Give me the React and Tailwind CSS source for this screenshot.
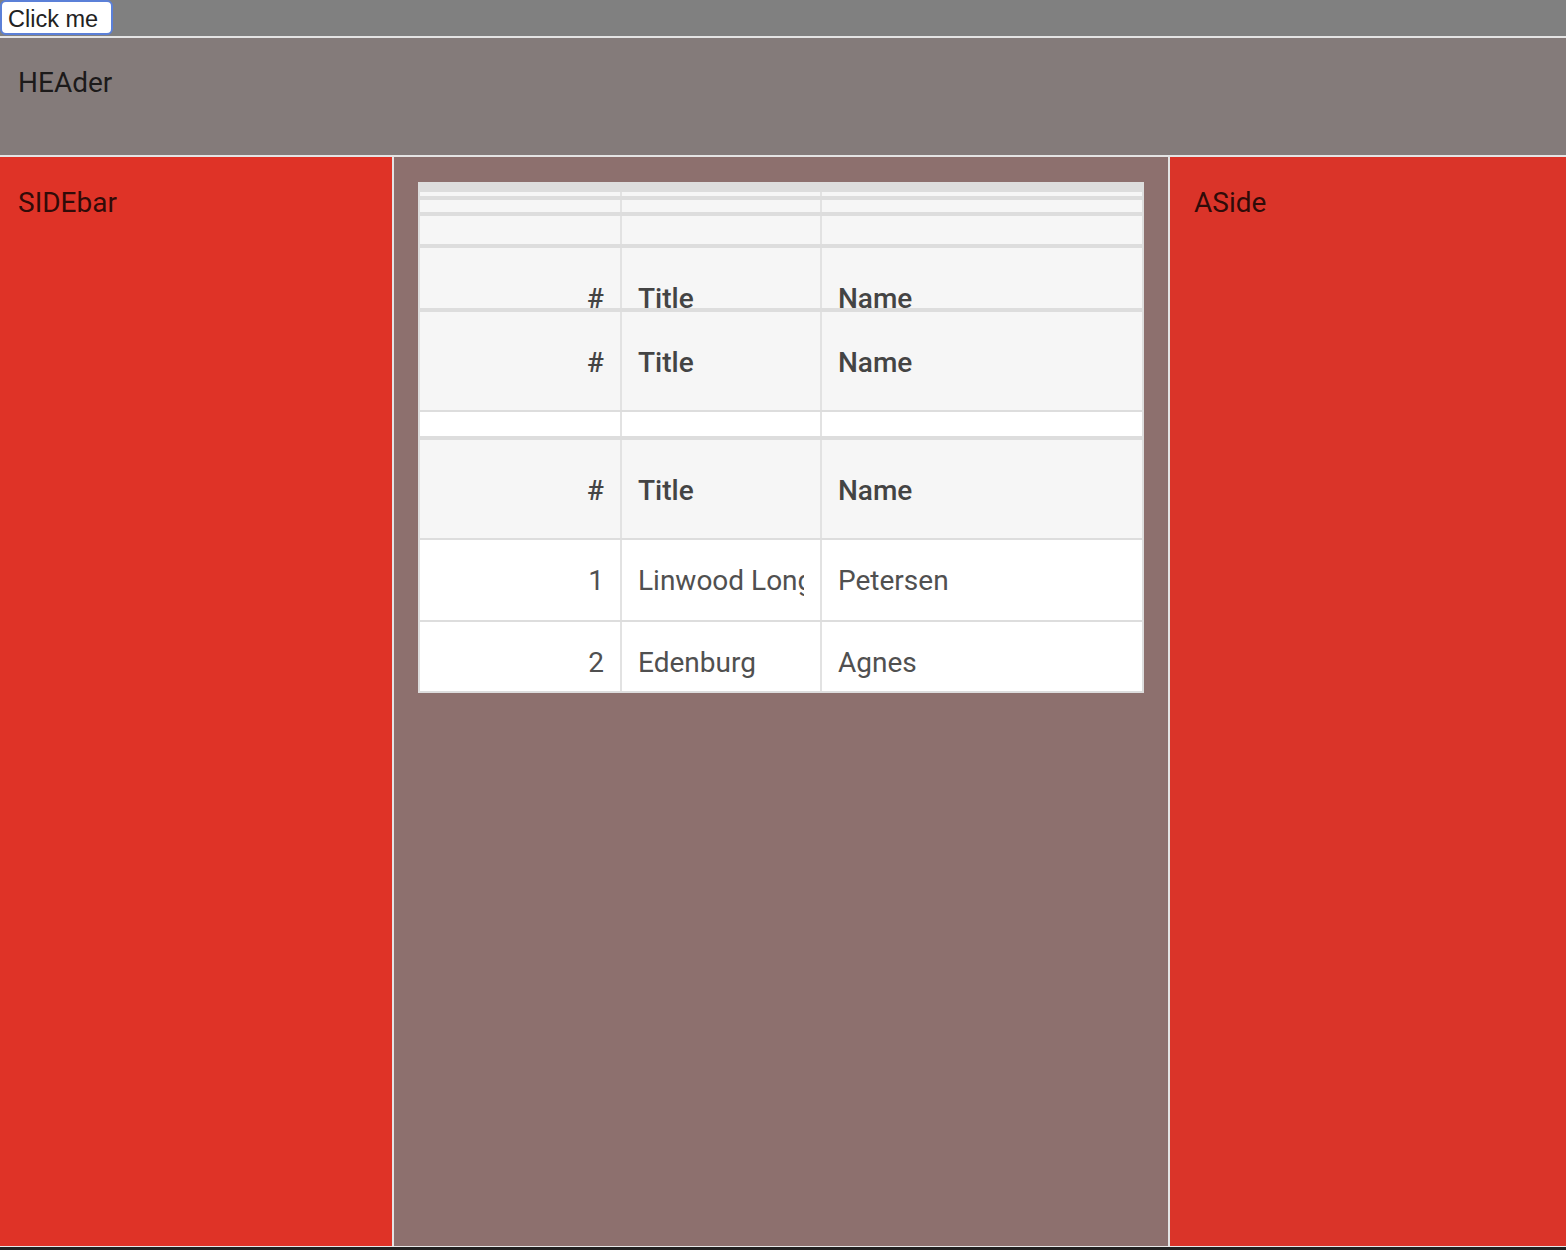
import React from "react";

const rows = [
  { n: "1", title: "Linwood Longfellow", name: "Petersen" },
  { n: "2", title: "Edenburg", name: "Agnes" },
];

const HeadCells = () => (
  <>
    <div className="flex h-full items-center justify-end bg-[#f6f6f6] pr-[16px] pt-[4px]">#</div>
    <div className="flex h-full items-center bg-[#f6f6f6] pl-[16px] pt-[4px]">Title</div>
    <div className="flex h-full items-center bg-[#f6f6f6] pl-[16px] pt-[4px]">Name</div>
  </>
);

const Spacer = ({ h, white }) => (
  <div className={`grid grid-cols-[200px_198px_1fr] gap-x-[2px] bg-[#e2e2e2] ${h}`}>
    <div className={white ? "bg-white" : "bg-[#f6f6f6]"} />
    <div className={white ? "bg-white" : "bg-[#f6f6f6]"} />
    <div className={white ? "bg-white" : "bg-[#f6f6f6]"} />
  </div>
);

const DataTable = () => (
  <div className="w-full border-2 border-t-[10px] border-[#dddddd] bg-[#dddddd] font-['Roboto',sans-serif] text-[28px]">
    <Spacer h="h-[4px]" />
    <div className="mt-[4px]">
      <Spacer h="h-[12px]" />
    </div>
    <div className="mt-[4px]">
      <Spacer h="h-[28px]" />
    </div>

    {/* stacked sticky headers */}
    <div className="mt-[4px] h-[60px] overflow-hidden">
      <div className="grid h-[98px] grid-cols-[200px_198px_1fr] gap-x-[2px] bg-[#e2e2e2] font-medium text-[#444]">
        <HeadCells />
      </div>
    </div>
    <div className="mt-[4px] grid h-[98px] grid-cols-[200px_198px_1fr] gap-x-[2px] bg-[#e2e2e2] font-medium text-[#444]">
      <HeadCells />
    </div>
    <div className="mt-[2px]">
      <Spacer h="h-[24px]" white />
    </div>
    <div className="mt-[4px] grid h-[98px] grid-cols-[200px_198px_1fr] gap-x-[2px] bg-[#e2e2e2] font-medium text-[#444]">
      <HeadCells />
    </div>

    <div className="h-[153px] overflow-hidden">
      {rows.map((r) => (
        <div
          key={r.n}
          className="mt-[2px] grid h-[80px] grid-cols-[200px_198px_1fr] gap-x-[2px] bg-[#e2e2e2] text-[#505050]"
        >
          <div className="flex items-center justify-end bg-white pr-[16px] pt-[2px]">{r.n}</div>
          <div className="flex items-center bg-white px-[16px] pt-[2px]">
            <div className="overflow-hidden whitespace-nowrap">{r.title}</div>
          </div>
          <div className="flex items-center bg-white pl-[16px] pt-[2px]">{r.name}</div>
        </div>
      ))}
    </div>
  </div>
);

export default function App() {
  return (
    <div className="h-[1250px] w-[1566px] overflow-hidden bg-[#222] font-['Roboto',sans-serif]">
      {/* top strip */}
      <div className="h-[36px] bg-[#808080]">
        <button className="h-[35px] w-[113px] rounded-[6px] border-2 border-[#5b80d8] bg-white pb-[1px] pl-[6px] text-left font-['Liberation_Sans',sans-serif] text-[23.5px] text-[#222]">
          Click me
        </button>
      </div>

      <header className="h-[121px] border-y-2 border-[#e4e4e4] bg-[#847b7a] pl-[18px] pt-[28px] text-[28px] leading-[33px] text-black/80">
        HEAder
      </header>

      <div className="grid h-[1090px] grid-cols-[392px_2px_774px_2px_1fr] border-b border-white/20 bg-[#e4e4e4]">
        <aside className="bg-[#df3327] pl-[18px] pt-[29px] text-[28px] leading-[33px] text-black/80">
          SIDEbar
        </aside>
        <div />
        <main className="bg-[#8d706e] px-[24px] pt-[25px]">
          <DataTable />
        </main>
        <div />
        <aside className="bg-[#da3429] pl-[24px] pt-[29px] text-[28px] leading-[33px] text-black/80">
          ASide
        </aside>
      </div>
    </div>
  );
}
